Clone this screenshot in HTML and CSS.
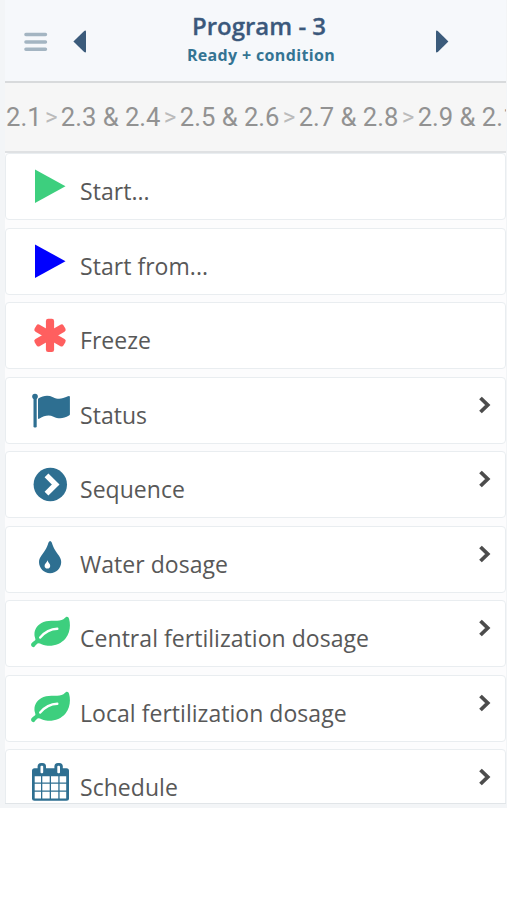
FILE: index.html
```html
<!DOCTYPE html>
<html lang="en">
<head>
<meta charset="utf-8">
<title>Program - 3</title>
<link rel="stylesheet" href="styles.css">
</head>
<body>
<svg class="defs" aria-hidden="true">
  <symbol id="play" viewBox="0 0 40 40"><path d="M5 3.5 35.5 20.2 5 37Z"/></symbol>
  <symbol id="leaf" viewBox="0 0 40 40"><path d="M36 4.1C37.5 3.4 38.6 4.3 39.1 6C40.8 12 40 20 35.5 25.5C31 31 23 33.8 16 32.6C12.5 31.9 10.2 30.4 8.7 30.3C7.1 30.3 5.7 32.2 4.5 33.7C3.5 34.8 1.4 33.7 1.1 31.9C.8 29.9 4.2 27.9 5.3 26.9C5.7 26.4 4.8 24.6 4.5 22.6C4 16.5 7.3 11.5 13.5 9C21 6.5 29 9.2 33.4 6.3Z"/><path class="vein" d="M10.2 24.6C14.7 19.2 19.5 16 27.3 15.8"/></symbol>
  <symbol id="chevron" viewBox="0 0 16 20"><path class="chevron-line" d="m3.5 3 7.2 7-7.2 7"/></symbol>
</svg>
<main class="panel">
  <header class="header">
    <svg class="menu" viewBox="0 0 24 20"><path d="M1.9 2.5H21.5M1.9 10H21.5M1.9 17.3H21.5"/></svg>
    <svg class="arrow" viewBox="0 0 14 24"><path d="M.4 11.4 11.2 1Q13 0 13 1.5V21.5Q13 23 11.2 22Z"/></svg>
    <div class="heading"><h1>Program - 3</h1><p>Ready + condition</p></div>
    <svg class="arrow" viewBox="0 0 14 24"><path d="M13.4 11.4 2.8 1Q1 0 1 1.5V21.5Q1 23 2.8 22Z"/></svg>
  </header>
  <div class="steps"><span>2.1</span><i>&gt;</i><span>2.3 &amp; 2.4</span><i>&gt;</i><span>2.5 &amp; 2.6</span><i>&gt;</i><span>2.7 &amp; 2.8</span><i>&gt;</i><span>2.9 &amp; 2.1</span></div>
  <ul class="list">
    <li class="row"><svg class="icon green"><use href="#play"/></svg><span class="label">Start...</span></li>
    <li class="row"><svg class="icon blue"><use href="#play"/></svg><span class="label">Start from...</span></li>
    <li class="row"><svg class="icon red" viewBox="0 0 40 40"><g transform="translate(20 20.4)"><rect x="-4.1" y="-16.7" width="8.2" height="33.4" rx="2.3"/><rect x="-4.1" y="-16.7" width="8.2" height="33.4" rx="2.3" transform="rotate(60)"/><rect x="-4.1" y="-16.7" width="8.2" height="33.4" rx="2.3" transform="rotate(-60)"/></g></svg><span class="label">Freeze</span></li>
    <li class="row"><svg class="icon teal" viewBox="0 0 40 40"><circle cx="5" cy="6.5" r="2.8"/><rect x="3.5" y="7" width="3.2" height="30.5" rx="1.2"/><path d="M8 9.4Q8 8.7 8.7 8.3C13 5.7 18 4.8 23 7.2C28.5 9.8 32 8.8 37.9 6.2Q39.9 5.4 39.9 7V24.2Q39.9 25 39 25.6C33.5 28.7 29 29.3 23.5 26.7C18.5 24.4 14 26 9.5 28.6Q8 29.4 8 28Z"/></svg><span class="label">Status</span><svg class="chevron"><use href="#chevron"/></svg></li>
    <li class="row"><svg class="icon teal" viewBox="0 0 40 40"><circle cx="20.3" cy="20.5" r="16.7"/><path class="cutout" d="m16.5 11.3 9.2 9.2-9.2 9.2"/></svg><span class="label">Sequence</span><svg class="chevron"><use href="#chevron"/></svg></li>
    <li class="row"><svg class="icon teal" viewBox="0 0 40 40"><path d="M18.4 3.7Q20.1.5 21.9 3.7C23.4 9.4 26 12.2 29 16.8C30.5 19.2 31.2 20.8 31.2 23C31.2 29.2 26.2 34.2 20.1 34.2S9 29.2 9 23C9 20.8 9.9 19 11.3 16.8C14.3 12.2 16.9 9.4 18.4 3.7Z"/><path class="white" d="M17.5 21.3C18.2 23.9 20.2 24.6 20.2 26.8A2.8 2.8 0 0 1 14.6 26.8C14.6 24.6 16.7 23.9 17.5 21.3Z"/></svg><span class="label">Water dosage</span><svg class="chevron"><use href="#chevron"/></svg></li>
    <li class="row"><svg class="icon green"><use href="#leaf"/></svg><span class="label">Central fertilization dosage</span><svg class="chevron"><use href="#chevron"/></svg></li>
    <li class="row"><svg class="icon green"><use href="#leaf"/></svg><span class="label">Local fertilization dosage</span><svg class="chevron"><use href="#chevron"/></svg></li>
    <li class="row"><svg class="icon teal" viewBox="0 0 40 40"><rect x="2" y="6.3" width="37" height="32.4" rx="2.5"/><path class="white" d="M4.7 14.3H11V20.5H4.7ZM12.3 14.3H19.7V20.5H12.3ZM21 14.3H28.3V20.5H21ZM29.6 14.3H36.2V20.5H29.6ZM4.7 21.8H11V28.5H4.7ZM12.3 21.8H19.7V28.5H12.3ZM21 21.8H28.3V28.5H21ZM29.6 21.8H36.2V28.5H29.6ZM4.7 29.8H11V36.5H4.7ZM12.3 29.8H19.7V36.5H12.3ZM21 29.8H28.3V36.5H21ZM29.6 29.8H36.2V36.5H29.6Z"/><rect x="7.6" y="1" width="8.4" height="12" rx="3.5"/><rect x="24.4" y="1" width="8.4" height="12" rx="3.5"/><rect class="white" x="10.5" y="3.7" width="2.7" height="7.6" rx="1"/><rect class="white" x="27.3" y="3.7" width="2.7" height="7.6" rx="1"/></svg><span class="label">Schedule</span><svg class="chevron"><use href="#chevron"/></svg></li>
  </ul>
</main>
</body>
</html>
```
FILE: styles.css
```css
* { box-sizing: border-box; }
body { margin: 0; background: #fff; font-family: "Open Sans", "Noto Sans", sans-serif; }
.defs { position: absolute; width: 0; height: 0; }
.panel { width: 507px; height: 808px; padding: 0 1px 4px 5px; background: #f3f5f7; overflow: hidden; display: flex; flex-direction: column; }
.header { height: 83px; flex: none; display: flex; align-items: flex-start; background: #f6f8fb; border-bottom: 2px solid #d8dadc; }
.menu { width: 24px; height: 20px; margin: 32px 0 0 18.5px; flex: none; fill: none; stroke: #a4b5c2; stroke-width: 3.4; stroke-linecap: round; }
.arrow { width: 14px; height: 24px; flex: none; margin-top: 30px; margin-left: 25.5px; fill: #3b5b7b; }
.heading { width: 348px; text-align: center; margin-top: 9px; }
.heading + .arrow { margin-left: 0; }
h1 { margin: 0 4px 0 0; font-size: 24px; line-height: 33px; font-weight: 600; color: #3b587c; -webkit-text-stroke: .3px #3b587c; }
p { margin: 3px 0 0; font-size: 16px; line-height: 20px; font-weight: 700; letter-spacing: .35px; color: #347493; }
.steps { height: 70px; flex: none; display: flex; align-items: center; overflow: hidden; white-space: nowrap; background: #f6f6f6; border-bottom: 2px solid #dfe1e3; padding-left: 1px; font: 25.6px/68px Roboto, sans-serif; color: #929292; }
.steps span { flex: none; }
.steps i { flex: none; width: 19.3px; text-align: center; font-style: normal; font-size: 24px; color: #bbb; }
.list { list-style: none; margin: 0; padding: 0; flex: 1; overflow: hidden; background: #fcfcfd; border-bottom: 1px solid #e1e5e8; display: flex; flex-direction: column; gap: 7.5px; }
.row { height: 67px; flex: none; display: flex; align-items: flex-start; background: #fff; border: 1.5px solid #e9edf0; border-radius: 4px; }
.icon { width: 40px; height: 40px; margin: 12px 0 0 24px; flex: none; }
.label { margin: 20px 0 0 10px; flex: 1; font-size: 23px; line-height: 34px; letter-spacing: .04px; color: #585858; white-space: nowrap; }
.chevron { width: 16px; height: 20px; margin: 17px 12.5px 0 0; flex: none; }
.chevron-line { fill: none; stroke: #4c4c4c; stroke-width: 3.8; }
.green { fill: #3dcf7e; }
.blue { fill: #00f; }
.red { fill: #ff5f5f; }
.teal { fill: #2e6f91; }
.white { fill: #fff; }
.vein { fill: none; stroke: #fff; stroke-width: 2.4; stroke-linecap: round; }
.cutout { fill: none; stroke: #fff; stroke-width: 5.4; }
```
